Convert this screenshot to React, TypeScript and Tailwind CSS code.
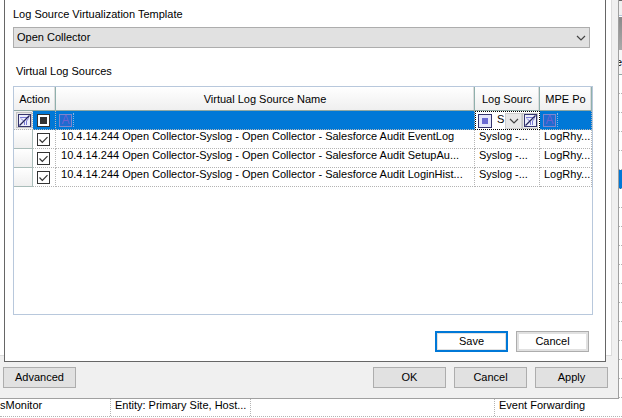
import type { ReactNode } from "react";

const sources = [
  { name: "10.4.14.244 Open Collector-Syslog - Open Collector - Salesforce Audit EventLog", type: "Syslog -...", policy: "LogRhy..." },
  { name: "10.4.14.244 Open Collector-Syslog - Open Collector - Salesforce Audit SetupAu...", type: "Syslog -...", policy: "LogRhy..." },
  { name: "10.4.14.244 Open Collector-Syslog - Open Collector - Salesforce Audit LoginHist...", type: "Syslog -...", policy: "LogRhy..." },
];

function Chevron() {
  return (
    <svg width="10" height="6" viewBox="0 0 10 6" fill="none" stroke="#444" strokeWidth="1.2" aria-hidden="true">
      <path d="M1 1l4 4 4-4" />
    </svg>
  );
}

function ClearFilterIcon() {
  return (
    <svg width="13" height="13" viewBox="0 0 13 13" aria-hidden="true">
      <rect x="0.5" y="0.5" width="12" height="12" fill="#eceefb" stroke="#34346e" />
      <path d="M2 3.5h9M3 4.5l3.5 3.5v3M10.5 4.5L8.5 7v4" fill="none" stroke="#7a7ad6" />
      <path d="M1.5 11.5l10-10" stroke="#26265c" strokeWidth="1.3" />
    </svg>
  );
}

function ClearFilter({ label }: { label: string }) {
  return (
    <button type="button" aria-label={label} className="flex h-4 w-4 shrink-0 items-center justify-center border border-[#c4c4c4] bg-[#e8e8e8]">
      <ClearFilterIcon />
    </button>
  );
}

function Check({ label, mixed }: { label: string; mixed?: boolean }) {
  return (
    <label className="ml-1 grid h-[13px] w-[13px]">
      <input type="checkbox" aria-label={label} defaultChecked className="col-start-1 row-start-1 h-[13px] w-[13px] appearance-none border border-[#333] bg-white" />
      <svg className="pointer-events-none col-start-1 row-start-1" width="13" height="13" viewBox="0 0 13 13" fill="none" aria-hidden="true">
        {mixed ? <rect x="3" y="3" width="7" height="7" fill="#333" /> : <path d="M2.5 6.5l2.8 2.8 5.2-5.2" stroke="#333" strokeWidth="1.2" />}
      </svg>
    </label>
  );
}

function TextFilter({ label }: { label: string }) {
  return (
    <label className="flex h-[18px] items-center pl-[3px]">
      <span className="flex h-[13px] w-[13px] shrink-0 items-center justify-center border border-[#7f86cc] bg-[#1f6bd0] text-[12px] leading-3 text-[#6a62d0]">A</span>
      <input type="text" aria-label={label} className="ml-px h-[14px] w-0 min-w-0 flex-1 border-l border-dotted border-[#8cb4e0] bg-transparent outline-none" />
    </label>
  );
}

function HeaderCell({ children, span }: { children: ReactNode; span?: number }) {
  return (
    <th colSpan={span} className="h-6 overflow-hidden border-r border-b border-r-[#8fb0ac] border-b-[#8fa8a4] bg-linear-to-b from-white to-[#efefef] p-0 text-center font-normal whitespace-nowrap shadow-[inset_-1px_0_0_#dcdcdc]">
      {children}
    </th>
  );
}

function DialogButton({ children }: { children: ReactNode }) {
  return (
    <button type="button" className="h-[21px] w-[73px] border border-[#adadad] bg-[#e1e1e1] text-center leading-[19px]">
      {children}
    </button>
  );
}

const cell = "h-[19px] overflow-hidden border-r border-b border-dotted border-[#b4b4b4] p-0 whitespace-nowrap";

function SourcesTable() {
  return (
    <table aria-labelledby="sources-label" className="w-full table-fixed border-separate border-spacing-0">
      <colgroup>
        <col className="w-[19px]" />
        <col className="w-[23px]" />
        <col />
        <col className="w-[65px]" />
        <col className="w-[52px]" />
      </colgroup>
      <thead>
        <tr>
          <HeaderCell span={2}>Action</HeaderCell>
          <HeaderCell>Virtual Log Source Name</HeaderCell>
          <HeaderCell>Log Sourc</HeaderCell>
          <HeaderCell>MPE Po</HeaderCell>
        </tr>
      </thead>
      <tbody>
        <tr className="bg-[#0078d7]">
          <td className={`${cell} bg-[#f0f0f0] pl-0.5`}><ClearFilter label="Clear all filters" /></td>
          <td className={cell}><Check label="Filter by action" mixed /></td>
          <td className={cell}><TextFilter label="Filter by name" /></td>
          <td className="h-[19px] overflow-hidden border border-dotted border-black bg-white p-0">
            <div className="flex h-[17px] items-center pl-0.5">
              <svg className="shrink-0" width="14" height="14" viewBox="0 0 14 14" aria-hidden="true">
                <rect x="0.5" y="0.5" width="13" height="13" fill="#e4e6fa" stroke="#34346e" />
                <rect x="4" y="4" width="6" height="6" fill="#6a6ad2" />
              </svg>
              <div className="grid w-[30px] shrink-0">
                <select aria-label="Filter by log source type" className="col-start-1 row-start-1 h-4 w-full appearance-none bg-transparent pb-1.5 pl-[5px] leading-3">
                  <option>S</option>
                </select>
                <span className="pointer-events-none col-start-1 row-start-1 flex h-4 w-[17px] items-center justify-center justify-self-end border border-[#cfcfcf] bg-[#e8e8e8]">
                  <Chevron />
                </span>
              </div>
              <ClearFilter label="Clear log source type filter" />
            </div>
          </td>
          <td className={cell}><TextFilter label="Filter by MPE policy" /></td>
        </tr>
        {sources.map((source) => (
          <tr key={source.name}>
            <td className="border-r border-b border-[#a9bcb9] bg-linear-to-b from-white to-[#efefef] p-0"></td>
            <td className={cell}><Check label={source.name} /></td>
            <td className={cell}><div className="h-[18px] pl-[5px] leading-3">{source.name}</div></td>
            <td className={cell}><div className="h-[18px] pl-1 leading-3">{source.type}</div></td>
            <td className={cell}><div className="h-[18px] pl-1 leading-3">{source.policy}</div></td>
          </tr>
        ))}
      </tbody>
    </table>
  );
}

// Sliver of the main window's grid that stays visible beside the dialogs
function GridEdge() {
  return (
    <div className="w-[3px] shrink-0 overflow-hidden">
      <div className="h-4 border-t border-b border-t-[#666] border-b-[#b8c8dc] bg-[#f0f0f0]"></div>
      <div className="mt-px h-[33px] bg-linear-to-b from-[#8a8a8a] to-[#aaa]"></div>
      <div className="flex h-[25px] items-center justify-end border-b border-[#8fa8a4] bg-[#f7f7f7]">e</div>
      {Array.from({ length: 17 }, (_, i) => (
        <div key={i} className={i === 5 ? "h-[19px] border-b border-dotted border-[#b4b4b4] bg-[#0078d7]" : "h-[19px] border-b border-dotted border-[#b4b4b4]"}></div>
      ))}
    </div>
  );
}

function TemplateDialog() {
  return (
    <section className="relative mr-3 ml-1 border-r border-b border-l border-[#666] bg-white pt-[6px] pb-[9px] pl-2">
      <label htmlFor="template" className="block h-[21px] leading-4">Log Source Virtualization Template</label>
      <div className="mr-[15px] grid items-center">
        <select id="template" className="col-start-1 row-start-1 h-[21px] w-full appearance-none border border-[#adadad] bg-[#e1e1e1] pl-[3px] leading-[19px]">
          <option>Open Collector</option>
        </select>
        <span className="pointer-events-none col-start-1 row-start-1 mr-1 justify-self-end"><Chevron /></span>
      </div>
      <h2 id="sources-label" className="mt-[15px] h-[23px] pl-[3px] leading-4">Virtual Log Sources</h2>
      <div className="mr-3 min-h-[229px] border border-[#b8c8dc]">
        <SourcesTable />
      </div>
      <div className="mt-4 mr-4 flex justify-end gap-2">
        <button type="button" className="h-[21px] w-[73px] border-2 border-[#0078d7] bg-white text-center leading-[17px] shadow-[inset_0_0_0_1px_#e1e1e1]">Save</button>
        <button type="button" className="h-[21px] w-[73px] border border-[#adadad] bg-white text-center leading-[19px] shadow-[inset_0_0_0_2px_#e1e1e1]">Cancel</button>
      </div>
    </section>
  );
}

export default function App() {
  return (
    <main className="overflow-hidden bg-white font-['Liberation_Sans',Arial,sans-serif] text-[11px] leading-4 text-black">
      <div className="flex">
        <div className="relative min-w-0 flex-1 border-r border-b border-[#a0a0a0] bg-[#f0f0f0]">
          <div className="absolute top-0 right-[6px] bottom-[42px] left-0 border-r border-b border-[#dcdcdc] bg-white"></div>
          <TemplateDialog />
          <div className="flex gap-2 pt-[5px] pr-[10px] pb-[10px] pl-[3px]">
            <DialogButton>Advanced</DialogButton>
            <span className="flex-1"></span>
            <DialogButton>OK</DialogButton>
            <DialogButton>Cancel</DialogButton>
            <DialogButton>Apply</DialogButton>
          </div>
        </div>
        <GridEdge />
      </div>
      <div className="flex h-[18px] border-b border-dotted border-[#b4b4b4] leading-3 whitespace-nowrap">
        <div className="w-[111px] shrink-0 border-r border-dotted border-[#b4b4b4]">sMonitor</div>
        <div className="w-[140px] shrink-0 border-r border-dotted border-[#b4b4b4] pl-1">Entity: Primary Site, Host...</div>
        <div className="w-[244px] shrink-0 border-r border-dotted border-[#b4b4b4]"></div>
        <div className="flex-1 pl-1">Event Forwarding</div>
      </div>
    </main>
  );
}
